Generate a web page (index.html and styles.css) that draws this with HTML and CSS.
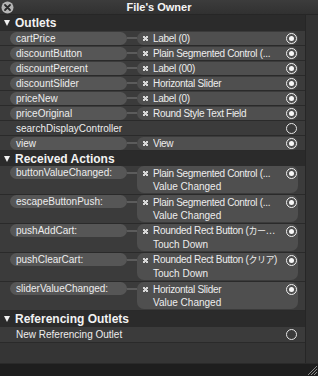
FILE: index.html
```html
<!DOCTYPE html>
<html lang="en">
<head>
  <meta charset="UTF-8" />
  <title>File's Owner</title>
  <link rel="stylesheet" href="styles.css">
</head>
<body>
  <div class="panel">
    <!-- Title bar -->
    <div class="titlebar">
      <svg class="close" width="13" height="13" viewBox="0 0 13 13">
        <circle cx="6.5" cy="6.5" r="6" fill="#b4b4b4"/>
        <path d="M4 4 L9 9 M9 4 L4 9" stroke="#2a2a2a" stroke-width="1.8" stroke-linecap="round"/>
      </svg>
      <span class="title">File's Owner</span>
      <span class="spacer"></span>
    </div>

    <div class="content">
      <div class="list">
        <!-- Outlets -->
        <div class="section first"><span class="tri"></span>Outlets</div>

        <div class="row">
          <span class="name">cartPrice</span><span class="wire"></span>
          <span class="target"><span class="x"></span><span class="text">Label (0)</span><span class="radio on"></span></span>
        </div>
        <div class="row">
          <span class="name">discountButton</span><span class="wire"></span>
          <span class="target"><span class="x"></span><span class="text">Plain Segmented Control (...</span><span class="radio on"></span></span>
        </div>
        <div class="row">
          <span class="name">discountPercent</span><span class="wire"></span>
          <span class="target"><span class="x"></span><span class="text">Label (00)</span><span class="radio on"></span></span>
        </div>
        <div class="row">
          <span class="name">discountSlider</span><span class="wire"></span>
          <span class="target"><span class="x"></span><span class="text">Horizontal Slider</span><span class="radio on"></span></span>
        </div>
        <div class="row">
          <span class="name">priceNew</span><span class="wire"></span>
          <span class="target"><span class="x"></span><span class="text">Label (0)</span><span class="radio on"></span></span>
        </div>
        <div class="row">
          <span class="name">priceOriginal</span><span class="wire"></span>
          <span class="target"><span class="x"></span><span class="text">Round Style Text Field</span><span class="radio on"></span></span>
        </div>
        <div class="row">
          <span class="name plain">searchDisplayController</span>
          <span class="radio free"></span>
        </div>
        <div class="row">
          <span class="name">view</span><span class="wire"></span>
          <span class="target"><span class="x"></span><span class="text">View</span><span class="radio on"></span></span>
        </div>

        <!-- Received Actions -->
        <div class="section"><span class="tri"></span>Received Actions</div>

        <div class="row double">
          <span class="name">buttonValueChanged:</span><span class="wire"></span>
          <span class="target">
            <span class="line"><span class="x"></span><span class="text">Plain Segmented Control (...</span><span class="radio on"></span></span>
            <span class="line sub">Value Changed</span>
          </span>
        </div>
        <div class="row double">
          <span class="name">escapeButtonPush:</span><span class="wire"></span>
          <span class="target">
            <span class="line"><span class="x"></span><span class="text">Plain Segmented Control (...</span><span class="radio on"></span></span>
            <span class="line sub">Value Changed</span>
          </span>
        </div>
        <div class="row double">
          <span class="name">pushAddCart:</span><span class="wire"></span>
          <span class="target">
            <span class="line"><span class="x"></span><span class="text">Rounded Rect Button (<span class="jp">カー</span>…</span><span class="radio on"></span></span>
            <span class="line sub">Touch Down</span>
          </span>
        </div>
        <div class="row double">
          <span class="name">pushClearCart:</span><span class="wire"></span>
          <span class="target">
            <span class="line"><span class="x"></span><span class="text">Rounded Rect Button (<span class="jp">クリア</span>)</span><span class="radio on"></span></span>
            <span class="line sub">Touch Down</span>
          </span>
        </div>
        <div class="row double">
          <span class="name">sliderValueChanged:</span><span class="wire"></span>
          <span class="target">
            <span class="line"><span class="x"></span><span class="text">Horizontal Slider</span><span class="radio on"></span></span>
            <span class="line sub">Value Changed</span>
          </span>
        </div>

        <!-- Referencing Outlets -->
        <div class="section first"><span class="tri"></span>Referencing Outlets</div>
        <div class="row tall">
          <span class="name plain">New Referencing Outlet</span>
          <span class="radio free"></span>
        </div>

        <div class="filler"></div>
      </div>
      <div class="scroll"></div>
    </div>

    <!-- Bottom bar with resize grip -->
    <div class="statusbar">
      <svg width="11" height="10" viewBox="0 0 11 10">
        <path d="M2 10 L11 1 M5 10 L11 4 M8 10 L11 7" stroke="#8a8a8a" stroke-width="1"/>
      </svg>
    </div>
  </div>
</body>
</html>
```

FILE: styles.css
```css
body {
  margin: 0;
  background: #1d1d1d;
  font-family: "Liberation Sans", Arial, "Noto Sans CJK JP", sans-serif;
  font-size: 10px;
  color: #ededed;
}

.panel {
  width: 318px;
  height: 376px;
  display: flex;
  flex-direction: column;
}

.titlebar {
  height: 15px;
  display: flex;
  align-items: center;
  background: linear-gradient(#3c3c3c, #313131);
  border-bottom: 1px solid #262626;
  box-sizing: border-box;
}

.close {
  margin-left: 1px;
  flex: none;
}

.title {
  flex: 1;
  text-align: center;
  font-weight: bold;
  font-size: 11px;
  color: #f5f5f5;
}

.spacer {
  width: 14px;
}

.content {
  flex: 1;
  display: flex;
}

.list {
  width: 305px;
  display: flex;
  flex-direction: column;
  background: #3b3b3b;
}

.scroll {
  flex: 1;
  background: #323232;
  border-left: 1px solid #262626;
}

.section {
  height: 15px;
  display: flex;
  align-items: center;
  gap: 5px;
  padding-left: 4px;
  background: #2b2b2b;
  font-size: 12px;
  font-weight: bold;
  color: #f2f2f2;
}

.section.first {
  height: 16px;
}

.tri {
  width: 0;
  height: 0;
  border-left: 3.5px solid transparent;
  border-right: 3.5px solid transparent;
  border-top: 6px solid #f0f0f0;
}

.row {
  height: 14px;
  display: flex;
  align-items: center;
  padding-left: 10px;
  border-bottom: 1px solid #2a2a2a;
}

.row.tall {
  height: 15px;
}

.row.double {
  height: 28px;
  align-items: flex-start;
}

.name {
  width: 111px;
  height: 13px;
  line-height: 13px;
  padding-left: 6px;
  border-radius: 7px;
  background: #565656;
  white-space: nowrap;
  flex: none;
}

.name.plain {
  background: none;
  width: auto;
  padding-left: 6px;
}

.wire {
  width: 10px;
  height: 2px;
  background: #5c5c5c;
  flex: none;
}

.row.double .wire {
  margin-top: 6px;
}

.target {
  flex: 1;
  min-width: 0;
  height: 13px;
  margin-right: 7px;
  padding: 0 1px 0 6px;
  border-radius: 7px;
  background: #4f4f4f;
  display: flex;
  align-items: center;
}

.row.double .target {
  height: 27px;
  flex-direction: column;
  align-items: stretch;
  justify-content: center;
}

.line {
  height: 13px;
  display: flex;
  align-items: center;
}

.line.sub {
  padding-left: 10px;
  line-height: 13px;
}

.x {
  width: 5px;
  height: 5px;
  margin-right: 5px;
  flex: none;
  background:
    linear-gradient(45deg, transparent 38%, #d8d8d8 38%, #d8d8d8 62%, transparent 62%),
    linear-gradient(-45deg, transparent 38%, #d8d8d8 38%, #d8d8d8 62%, transparent 62%);
}

.text {
  flex: 1;
  min-width: 0;
  overflow: hidden;
  white-space: nowrap;
  line-height: 13px;
  letter-spacing: -0.3px;
}

.jp {
  font-size: 9px;
  letter-spacing: -0.5px;
}

.radio {
  width: 11px;
  height: 11px;
  box-sizing: border-box;
  border: 1.5px solid #f2f2f2;
  border-radius: 50%;
  flex: none;
  display: flex;
  align-items: center;
  justify-content: center;
}

.radio.on::after {
  content: "";
  width: 5px;
  height: 5px;
  border-radius: 50%;
  background: #f7f7f7;
}

.radio.free {
  margin-left: auto;
  margin-right: 8px;
  border-color: #e6e6e6;
}

.filler {
  flex: 1;
  background: #353535;
}

.statusbar {
  height: 13px;
  background: #1e1e1e;
  border-top: 1px solid #2a2a2a;
  box-sizing: border-box;
  display: flex;
  justify-content: flex-end;
  align-items: flex-end;
  padding: 0 1px 1px 0;
}
```
